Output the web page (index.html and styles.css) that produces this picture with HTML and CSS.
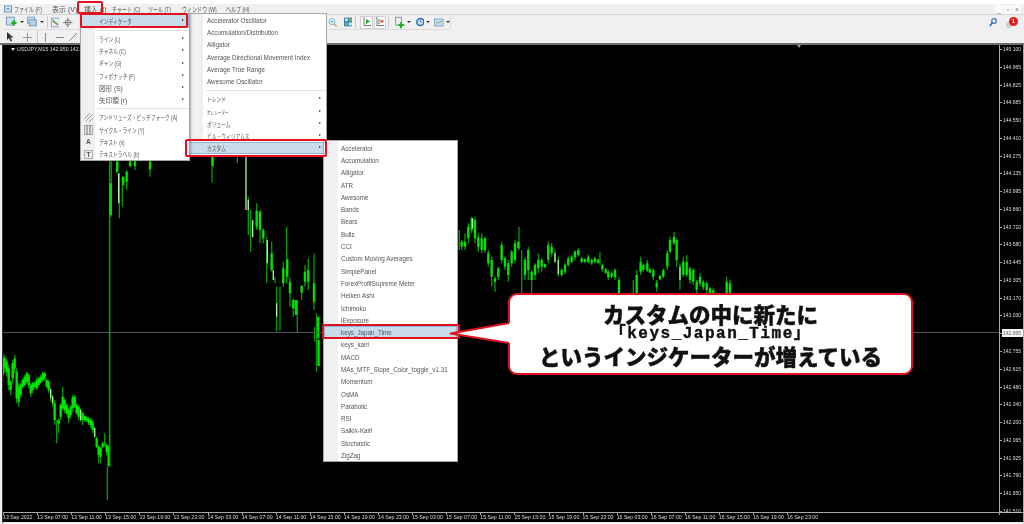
FILE: index.html
```html
<!DOCTYPE html>
<html lang="ja">
<head>
    <meta charset="UTF-8">
    <title>USDJPY,M15</title>
    <link rel="stylesheet" href="styles.css">
</head>
<body>
    <div class="screen">
        <div class="titlebar"></div>

        <!-- Menu bar -->
        <div class="menubar">
            <svg class="app-icon" width="8" height="8" viewBox="0 0 8 8"><rect x="0.5" y="1" width="7" height="6" fill="#dbe8f5" stroke="#6d94bd"/><path d="M2 5l2-2 2 2" fill="none" stroke="#4f7fae"/></svg>
            <span class="menubar-item jp">ファイル (F)</span>
            <span class="menubar-item">表示 (V)</span>
            <span class="menubar-item">挿入 (I)</span>
            <span class="menubar-item jp">チャート (C)</span>
            <span class="menubar-item jp">ツール (T)</span>
            <span class="menubar-item jp">ウィンドウ (W)</span>
            <span class="menubar-item jp">ヘルプ (H)</span>
            <div class="window-buttons">
                <span class="window-button">_</span>
                <span class="window-button">▫</span>
                <span class="window-button">×</span>
            </div>
        </div>

        <!-- Toolbars -->
        <div class="toolbars">
            <div class="toolbar toolbar-main">
                <div class="tool-panel">
                    <svg class="tool" width="14" height="12" viewBox="0 0 14 12"><rect x="0.5" y="0.5" width="9" height="9" fill="#cfe0f0" stroke="#6f8fb0"/><path d="M9 4v6M6 7h6" stroke="#19b51c" stroke-width="2.4"/></svg>
                    <i class="drop"></i>
                    <svg class="tool tool-profile" width="12" height="12" viewBox="0 0 12 12"><rect x="0.5" y="0.5" width="8" height="7" fill="#d5e3f1" stroke="#7b98b7"/><rect x="2.5" y="3.5" width="8" height="7" fill="#b9cfe6" stroke="#6a8cb0"/></svg>
                    <i class="drop"></i>
                    <i class="tool-sep tool-sep-a"></i>
                    <svg class="tool" width="10" height="11" viewBox="0 0 10 11"><rect x="0.5" y="0.5" width="9" height="10" fill="#e4eef6" stroke="#7f9db8"/><path d="M2 3l3 3" stroke="#2ba02b" stroke-width="1.6"/><path d="M5 6l3 2" stroke="#d9542f" stroke-width="1.6"/></svg>
                    <svg class="tool tool-cross" width="11" height="11" viewBox="0 0 11 11"><circle cx="5.5" cy="5.5" r="3" fill="#e8e8e8" stroke="#777"/><path d="M5.5 0v11M0 5.5h11" stroke="#777"/></svg>
                    <svg class="tool tool-zoom" width="11" height="11" viewBox="0 0 11 11"><circle cx="4.5" cy="4.5" r="3.5" fill="#d5eef8" stroke="#79b7d2"/><path d="M3 4.5h3" stroke="#3f8fb5"/><path d="M7 7l3 3" stroke="#d7a545" stroke-width="1.6"/></svg>
                    <svg class="tool tool-grid" width="10" height="10" viewBox="0 0 10 10"><rect width="10" height="10" fill="#2f79b8"/><rect x="1" y="1" width="3.5" height="3" fill="#cfe6f5"/><rect x="5.5" y="1" width="3.5" height="3" fill="#6cc05b"/><rect x="1" y="5.5" width="3.5" height="3.5" fill="#6cc05b"/><rect x="5.5" y="5.5" width="3.5" height="3.5" fill="#cfe6f5"/></svg>
                    <i class="tool-sep tool-sep-b"></i>
                    <span class="tool-pressed"><svg width="9" height="10" viewBox="0 0 9 10"><path d="M2 0v8.5h7" fill="none" stroke="#777"/><path d="M4 2v5l4-2.500z" fill="#2aa52a"/></svg></span>
                    <span class="tool-pressed"><svg width="9" height="10" viewBox="0 0 9 10"><path d="M2 0v8.500h7" fill="none" stroke="#777"/><path d="M4 2v5" stroke="#777"/><rect x="5.500" y="3" width="3" height="2.500" fill="#d9602f"/></svg></span>
                    <i class="tool-sep tool-sep-c"></i>
                    <svg class="tool" width="11" height="13" viewBox="0 0 11 13"><rect x="0.500" y="0.500" width="7" height="9" fill="#e8eef4" stroke="#8090a0"/><path d="M7 6v7M3.500 9.500h7" stroke="#17ad1b" stroke-width="2.200"/></svg>
                    <i class="drop"></i>
                    <svg class="tool tool-clock" width="10" height="10" viewBox="0 0 10 10"><circle cx="5" cy="5" r="4" fill="#dbe9f5" stroke="#246fb5" stroke-width="1.800"/><path d="M5 2.500V5l2 1" fill="none" stroke="#246fb5"/></svg>
                    <i class="drop"></i>
                    <svg class="tool tool-image" width="11" height="9" viewBox="0 0 11 9"><rect x="0.500" y="0.500" width="10" height="8" fill="#c6dcef" stroke="#7da2c4"/><path d="M2 6l2-2 2 1 3-2" fill="none" stroke="#6aa05a"/></svg>
                    <i class="drop"></i>
                </div>
                <div class="toolbar-right">
                    <svg width="8" height="9" viewBox="0 0 8 9"><circle cx="5" cy="3" r="2.300" fill="#fff" stroke="#2f6fc9" stroke-width="1.300"/><path d="M3.500 4.500L.800 8" stroke="#2f6fc9" stroke-width="1.500"/></svg>
                    <span class="bell"><i class="bell-base"></i><b class="bell-badge">1</b></span>
                </div>
            </div>
            <div class="toolbar toolbar-draw">
                <svg class="draw-tool" width="8" height="10" viewBox="0 0 8 10"><path d="M1 0v8l2-2 1.500 3.500 1.500-.7L4.500 5.500H7.500z" fill="#333"/></svg>
                <svg class="draw-tool draw-cross" width="9" height="9" viewBox="0 0 9 9"><path d="M4.500 0v9M0 4.500h9" stroke="#999"/></svg>
                <i class="tool-sep tool-sep-d"></i>
                <svg class="draw-tool draw-vline" width="3" height="9" viewBox="0 0 3 9"><path d="M1.500 0v9" stroke="#888"/></svg>
                <svg class="draw-tool draw-hline" width="8" height="3" viewBox="0 0 8 3"><path d="M0 1.500h8" stroke="#888"/></svg>
                <svg class="draw-tool draw-trend" width="8" height="8" viewBox="0 0 8 8"><path d="M0 8L8 0" stroke="#888"/></svg>
            </div>
        </div>

        <!-- Chart window -->
        <div class="chart">
            <div class="chart-row">
                <div class="plot">
                    <svg class="candles" viewBox="0 0 996 467" width="996" height="467">
                        <g transform="translate(-3 -45)">
                            <g transform="translate(0 340) scale(.3333)">
                                <path class="wick" d="M8 40V125M14 45V100M20 55V110M26 75V150M32 120V165M38 60V130M44 45V100M50 85V190M56 130V200M62 130V175M68 115V145M74 105V140M80 95V130M86 100V145M92 130V170M98 125V160M104 125V145M110 115V150M116 110V140M122 105V130M128 95V125M134 95V120M140 115V145M146 120V160M152 145V185M158 165V200M164 180V255M170 240V310M176 235V280M182 190V240M188 140V210M194 175V220M200 190V225M206 205V250M212 195V235M218 165V215M224 165V205M230 190V225M236 195V240M242 205V245M248 215V255M254 225V245M260 230V245M266 230V255M272 235V265M278 240V280M284 260V295M290 290V325M296 315V370M302 320V370M308 305V325M314 280V320M320 310V345M326 315V380M322 380V480"/>
                                <path class="body" d="M8 50V105M14 55V85M20 65V95M26 85V135M32 125V150M38 70V115M44 55V85M50 95V175M56 140V185M62 135V165M68 120V140M74 110V135M80 100V125M86 105V135M92 135V160M98 130V150M104 128V140M110 120V145M116 115V135M122 110V128M128 100V120M134 100V115M140 120V140M146 125V150M164 190V240M176 240V250M182 195V230M188 170V205M194 180V210M200 195V220M206 210V235M212 200V225M218 172V205M224 170V200M230 195V220M236 200V230M248 220V240M254 228V240M260 232V242M266 235V250M272 240V255M278 245V270M290 295V320M296 320V345M302 325V350M308 310V322M320 315V335M326 320V378"/>
                                <path class="glow" d="M152 148V175M158 170V190M242 210V240M284 265V290"/>
                            </g>
                            <g transform="translate(0 160) scale(.3333)">
                                <path class="spike" d="M329 -10V920"/>
                                <path class="wick" d="M334 -30V170M350 -30V40M358 40V175M367 50V140M380 30V90M390 -30V22M405 -30V30M450 -30V50M636 -30V68M712 -30V10M745 110V225M752 150V275M770 130V210M780 150V250M790 205V250M800 230V370M815 245V335M825 350V370M830 380V515M840 380V512M850 305V380M860 200V370M870 350V440M880 415V470M892 420V515M905 375V420M915 315V380M925 295V390M942 280V450M950 460V540"/>
                                <path class="body" d="M332 70V165M352 0V35M370 50V75M380 35V65M390 -10V18M405 -10V18M450 0V28M638 -10V18M770 152V200M780 155V210M790 210V235M815 280V330M850 325V370M862 298V350M870 365V400M880 420V445M888 420V465M905 378V398M915 335V365M925 330V365M942 370V425M955 470V535"/>
                                <path class="glow" d="M356 40V130M738 -10V150M745 120V150M758 180V232M802 240V310M820 330V360M830 430V470"/>
                            </g>
                            <g transform="translate(0 340) scale(.3333)">
                                <path class="wick" d="M950 -30V95M944 -40V5"/>
                                <path class="body" d="M956 0V78"/>
                            </g>
                            <g transform="translate(440 200) scale(.3333)">
                                <path class="wick" d="M58 90V150M65 120V150M75 100V150M85 70V130M95 50V100M105 50V130M115 100V155M125 100V160M135 110V160M145 150V200M155 170V260M165 230V275M175 200V240M185 125V190M195 170V210M205 180V245M215 150V200M225 120V190M237 80V150M245 150V290M255 170V240M265 140V240M275 210V285M285 190V240M295 160V220M305 175V215M315 190V205M325 125V190M335 130V170M345 150V190M355 170V230M365 205V230M375 190V222M385 170V200M395 165V190M405 150V180M415 145V170M425 170V190M435 175V190M445 165V190M455 175V195M465 170V190M480 155V195M487 190V215M497 205V222M505 210V240M515 215V235M525 205V240M537 230V300M580 240V300M590 210V300M602 170V225M610 190V215M622 180V215M630 205V220M640 205V240M650 240V275M660 225V240M670 205V235M682 150V210M690 110V160M702 95V135M710 115V200M720 190V270M730 170V230M740 165V230M750 200V250M760 205V255M770 240V280M780 220V260M790 240V270M800 245V280M810 260V300M820 265V300M860 230V300M870 240V300"/>
                                <path class="body" d="M65 125V140M75 125V140M85 80V115M95 55V90M105 60V115M115 112V140M125 115V150M135 115V150M145 160V190M155 180V230M165 235V245M175 205V230M185 135V180M195 175V200M205 190V225M215 155V190M225 130V180M235 125V145M255 180V225M265 150V210M275 215V240M285 195V225M295 180V205M305 180V200M315 192V202M325 135V180M335 140V160M365 210V225M375 195V215M385 175V195M395 170V185M405 155V172M415 150V165M425 175V185M435 178V186M445 170V185M455 180V190M465 175V186M475 178V190M487 195V208M497 208V218M505 215V232M515 220V230M525 210V232M537 240V290M590 225V290M602 185V215M610 195V210M622 190V212M630 208V218M640 210V230M650 248V262M660 228V238M670 210V230M682 160V200M690 120V155M702 110V130M710 120V180M730 185V225M740 185V225M750 205V240M760 210V245M770 245V270M780 230V250M790 245V262M800 250V270M810 265V285M820 270V285M860 245V285M870 250V285"/>
                                <path class="glow" d="M98 55V85M345 160V185M355 180V222M720 200V240"/>
                            </g>
                        </g>
                    </svg>
                    <div class="chart-title"><i class="chart-title-arrow"></i>USDJPY,M15 142.950 142.960</div>
                    <i class="shift-marker"></i>
                    <i class="price-line"></i>
                </div>
                <div class="price-axis">
                    <span class="price">145.100</span>
                    <span class="price">144.965</span>
                    <span class="price">144.825</span>
                    <span class="price">144.685</span>
                    <span class="price">144.550</span>
                    <span class="price">144.410</span>
                    <span class="price">144.275</span>
                    <span class="price">144.135</span>
                    <span class="price">143.995</span>
                    <span class="price">143.860</span>
                    <span class="price">143.720</span>
                    <span class="price">143.580</span>
                    <span class="price">143.445</span>
                    <span class="price">143.305</span>
                    <span class="price">143.170</span>
                    <span class="price">143.030</span>
                    <span class="price price-current">142.895</span>
                    <span class="price">142.755</span>
                    <span class="price">142.615</span>
                    <span class="price">142.480</span>
                    <span class="price">142.340</span>
                    <span class="price">142.200</span>
                    <span class="price">142.065</span>
                    <span class="price">141.925</span>
                    <span class="price">141.790</span>
                    <span class="price">141.650</span>
                    <span class="price">141.510</span>
                </div>
            </div>
            <div class="time-axis">
                <span class="time">13 Sep 2022</span>
                <span class="time">13 Sep 07:00</span>
                <span class="time">13 Sep 11:00</span>
                <span class="time">13 Sep 15:00</span>
                <span class="time">13 Sep 19:00</span>
                <span class="time">13 Sep 23:00</span>
                <span class="time">14 Sep 03:00</span>
                <span class="time">14 Sep 07:00</span>
                <span class="time">14 Sep 11:00</span>
                <span class="time">14 Sep 15:00</span>
                <span class="time">14 Sep 19:00</span>
                <span class="time">14 Sep 23:00</span>
                <span class="time">15 Sep 03:00</span>
                <span class="time">15 Sep 07:00</span>
                <span class="time">15 Sep 11:00</span>
                <span class="time">15 Sep 15:00</span>
                <span class="time">15 Sep 19:00</span>
                <span class="time">15 Sep 23:00</span>
                <span class="time">16 Sep 03:00</span>
                <span class="time">16 Sep 07:00</span>
                <span class="time">16 Sep 11:00</span>
                <span class="time">16 Sep 15:00</span>
                <span class="time">16 Sep 19:00</span>
                <span class="time">16 Sep 23:00</span>
            </div>
        </div>

        <!-- Indicator list (second level) -->
        <div class="menu menu-indicators">
            <div class="menu-item">Accelerator Oscillator</div>
            <div class="menu-item">Accumulation/Distribution</div>
            <div class="menu-item">Alligator</div>
            <div class="menu-item">Average Directional Movement Index</div>
            <div class="menu-item">Average True Range</div>
            <div class="menu-item">Awesome Oscillator</div>
            <div class="menu-sep"></div>
            <div class="menu-item has-sub"><span class="jp">トレンド</span></div>
            <div class="menu-item has-sub menu-item-small"><span class="jp">オシレーター</span></div>
            <div class="menu-item has-sub"><span class="jp">ボリューム</span></div>
            <div class="menu-item has-sub"><span class="jp">ビル・ウィリアムス</span></div>
            <div class="menu-item has-sub is-active menu-item-custom"><span class="jp">カスタム</span></div>
        </div>

        <!-- Insert menu -->
        <div class="menu menu-insert">
            <div class="menu-item has-sub is-active menu-item-first"><span class="jp">インディケータ</span></div>
            <div class="menu-sep"></div>
            <div class="menu-item has-sub"><span class="jp">ライン (L)</span></div>
            <div class="menu-item has-sub"><span class="jp">チャネル (C)</span></div>
            <div class="menu-item has-sub"><span class="jp">ギャン (G)</span></div>
            <div class="menu-item has-sub"><span class="jp">フィボナッチ (F)</span></div>
            <div class="menu-item has-sub">図形 (S)</div>
            <div class="menu-item has-sub">矢印類 (r)</div>
            <div class="menu-sep"></div>
            <div class="menu-item">
                <svg class="menu-icon" width="9" height="9" viewBox="0 0 9 9"><path d="M0 6l6-6M1.500 8.500l7-7M5 9l4-4" stroke="#999" fill="none"/></svg>
                <span class="jp">アンドリューズ・ピッチフォーク (A)</span>
            </div>
            <div class="menu-item">
                <svg class="menu-icon" width="9" height="10" viewBox="0 0 9 10"><rect x="0.500" y="0.500" width="8" height="9" fill="#e8e8e8" stroke="#aaa"/><path d="M3 0v10M6 0v10" stroke="#777"/></svg>
                <span class="jp">サイクル・ライン (Y)</span>
            </div>
            <div class="menu-item">
                <span class="menu-icon menu-icon-letter">A</span>
                <span class="jp">テキスト (x)</span>
            </div>
            <div class="menu-item">
                <span class="menu-icon menu-icon-letter menu-icon-boxed">T</span>
                <span class="jp">テキストラベル (b)</span>
            </div>
        </div>

        <!-- Custom indicators (third level) -->
        <div class="menu menu-custom">
            <div class="menu-item">Accelerator</div>
            <div class="menu-item">Accumulation</div>
            <div class="menu-item">Alligator</div>
            <div class="menu-item">ATR</div>
            <div class="menu-item">Awesome</div>
            <div class="menu-item">Bands</div>
            <div class="menu-item">Bears</div>
            <div class="menu-item">Bulls</div>
            <div class="menu-item">CCI</div>
            <div class="menu-item">Custom Moving Averages</div>
            <div class="menu-item">SimplePanel</div>
            <div class="menu-item">ForexProfitSupreme Meter</div>
            <div class="menu-item">Heiken Ashi</div>
            <div class="menu-item">Ichimoku</div>
            <div class="menu-item">iExposure</div>
            <div class="menu-item is-active">keys_Japan_Time</div>
            <div class="menu-item">keys_kairi</div>
            <div class="menu-item">MACD</div>
            <div class="menu-item">MAs_MTF_Slope_Color_toggle_v1.31</div>
            <div class="menu-item">Momentum</div>
            <div class="menu-item">OsMA</div>
            <div class="menu-item">Parabolic</div>
            <div class="menu-item">RSI</div>
            <div class="menu-item">Saikix-Kairi</div>
            <div class="menu-item">Stochastic</div>
            <div class="menu-item">ZigZag</div>
        </div>

        <!-- Red annotation boxes -->
        <div class="mark mark-insert"></div>
        <div class="mark mark-indicators"></div>
        <div class="mark mark-custom"></div>
        <div class="mark mark-keys"></div>

        <!-- Callout -->
        <div class="callout">
            <p class="callout-big">カスタムの中に新たに</p>
            <p class="callout-mid">「keys_Japan_Time」</p>
            <p class="callout-big">というインジケーターが増えている</p>
        </div>
        <svg class="callout-tail" width="62" height="26" viewBox="0 0 62 26">
            <path d="M61 3L1 13.500L61 23Z" fill="#fff"/>
            <path d="M60 3L1.500 13.500L60 23" fill="none" stroke="#e0101c" stroke-width="2" stroke-linejoin="round"/>
        </svg>
    </div>
</body>
</html>
```

FILE: styles.css
```css
/* Reset and basic layout */
* {
    margin: 0;
    padding: 0;
    box-sizing: border-box;
}

body {
    width: 1024px;
    height: 524px;
    overflow: hidden;
    background: #fff;
    font-family: "Liberation Sans", "Noto Sans CJK JP", sans-serif;
}

i {
    display: block;
}

/* the reference is a scaled down capture, everything is a bit soft */
.screen {
    position: relative;
    width: 1024px;
    height: 524px;
    overflow: hidden;
    display: flex;
    flex-direction: column;
    background: #f0f0f0;
    filter: blur(0.45px);
}

.titlebar {
    height: 4px;
    background: #fff;
}

/* kana in the original UI font are much narrower than Noto's */
.jp {
    display: inline-block;
    transform: scaleX(0.72);
    transform-origin: left center;
}

/* Menu bar */
.menubar {
    height: 11px;
    display: grid;
    grid-template-columns: 10px 38px 32px 28px 36px 34px 44px 1fr auto;
    align-items: center;
    padding-left: 4px;
    border-bottom: 1px solid #d4d4d4;
    font-size: 7px;
    color: #555;
}

.menubar-item {
    white-space: nowrap;
}

.window-buttons {
    grid-column: 9;
    display: flex;
    height: 9px;
    padding-right: 3px;
}

.window-button {
    width: 8px;
    margin-left: 1px;
    background: #fafafa;
    color: #777;
    font-size: 7px;
    line-height: 9px;
    text-align: center;
}

/* Toolbars */
.toolbars {
    height: 30px;
    border-bottom: 2px solid #6e6e6e;
}

.toolbar {
    height: 14px;
    display: flex;
    align-items: center;
}

.toolbar-main {
    height: 15px;
}

.tool-panel {
    width: 448px;
    height: 15px;
    margin-left: 3px;
    display: flex;
    align-items: center;
    padding-left: 3px;
    border: 1px solid #dcdcdc;
    border-top: 0;
    border-left: 0;
    border-radius: 0 0 3px 0;
}

.tool-profile {
    margin-left: 3px;
}

.drop {
    width: 0;
    height: 0;
    margin: 0 0 0 2px;
    border: 2px solid transparent;
    border-top: 2px solid #333;
    border-bottom: 0;
}

.tool-sep {
    width: 1px;
    height: 12px;
    background: #c9c9c9;
}

.tool-sep-a {
    margin: 0 3px;
}

.tool-cross {
    margin: 0 0 0 4px;
}

.tool-zoom {
    margin-left: 255px;
}

.tool-grid {
    margin-left: 6px;
}

.tool-sep-b {
    margin: 0 4px 0 3px;
}

.tool-pressed {
    width: 14px;
    height: 13px;
    margin-right: 1px;
    display: flex;
    align-items: center;
    justify-content: center;
    background: #fafafa;
    border: 1px solid #d0d0d0;
}

.tool-sep-c {
    margin: 0 6px 0 1px;
}

.tool-clock {
    margin-left: 5px;
}

.tool-image {
    margin-left: 4px;
}

.toolbar-right {
    margin-left: auto;
    display: flex;
    align-items: center;
    gap: 9px;
    padding-right: 6px;
}

.bell {
    position: relative;
    display: block;
    width: 12px;
    height: 11px;
}

.bell-base {
    position: absolute;
    left: 0;
    bottom: 0;
    width: 6px;
    height: 6px;
    border-radius: 50%;
    background: #ccc;
}

.bell-badge {
    position: absolute;
    right: 0;
    top: 0;
    width: 9px;
    height: 9px;
    border-radius: 50%;
    background: #e0201c;
    color: #fff;
    font-size: 6px;
    line-height: 9px;
    text-align: center;
}

.toolbar-draw {
    padding-left: 6px;
}

.draw-cross {
    margin-left: 9px;
}

.tool-sep-d {
    margin: 0 6px 0 5px;
}

.draw-hline {
    margin-left: 9px;
}

.draw-trend {
    margin-left: 5px;
}

/* Chart window */
.chart {
    flex: 1;
    display: flex;
    flex-direction: column;
    margin-left: 2px;
    background: #000;
    border-left: 1px solid #333;
    border-right: 1px solid #a8a8a8;
    border-bottom: 2px solid #f0f0f0;
}

.chart-row {
    flex: 1;
    display: flex;
}

.plot {
    position: relative;
    width: 996px;
    overflow: hidden;
}

.candles {
    display: block;
}

.wick {
    fill: none;
    stroke: #009a00;
    stroke-width: 4;
}

.body {
    fill: none;
    stroke: #00e400;
    stroke-width: 7;
}

.glow {
    fill: none;
    stroke: #a8f0a8;
    stroke-width: 4;
}

.spike {
    fill: none;
    stroke: #00a800;
    stroke-width: 4.5;
}

.chart-title {
    position: absolute;
    left: 8px;
    top: 0;
    display: flex;
    align-items: center;
    gap: 2px;
    color: #ddd;
    font-size: 5.2px;
    line-height: 8px;
    white-space: nowrap;
}

.chart-title-arrow {
    width: 0;
    height: 0;
    border: 2px solid transparent;
    border-top: 3px solid #ddd;
    border-bottom: 0;
}

.shift-marker {
    position: absolute;
    left: 794px;
    top: 0;
    width: 0;
    height: 0;
    border: 2px solid transparent;
    border-top: 3px solid #8ca0b8;
    border-bottom: 0;
}

.price-line {
    position: absolute;
    left: 0;
    right: 0;
    top: 287px;
    height: 1px;
    background: #4c5866;
}

.price-axis {
    flex: 1;
    margin-bottom: -3px;
    display: flex;
    flex-direction: column;
    justify-content: space-between;
    border-left: 1px solid #a8a8a8;
}

.price {
    display: block;
    position: relative;
    height: 8px;
    margin-left: 2px;
    padding-left: 1px;
    color: #ddd;
    font-size: 5px;
    line-height: 8px;
    white-space: nowrap;
}

.price::before {
    content: "";
    position: absolute;
    left: -2px;
    top: 4px;
    width: 2px;
    height: 1px;
    background: #a8a8a8;
}

.price-current {
    width: 21px;
    background: #f4f4f4;
    color: #666;
}

.time-axis {
    height: 10px;
    display: flex;
    border-top: 1px solid #a8a8a8;
}

.time {
    position: relative;
    flex: 0 0 34.1px;
    color: #ddd;
    font-size: 5.2px;
    line-height: 9px;
    white-space: nowrap;
}

.time::before {
    content: "";
    position: absolute;
    left: 0;
    top: 0;
    width: 1px;
    height: 2px;
    background: #a8a8a8;
}

/* Dropdown menus */
.menu {
    position: absolute;
    background: #fff;
    border: 1px solid #a6a6a6;
    font-size: 6.3px;
    color: #555;
}

.menu-insert {
    left: 80px;
    top: 13px;
    width: 110px;
    height: 148px;
    font-size: 6.6px;
    background: linear-gradient(to right, #f0f0f0 14px, #fff 14px);
    box-shadow: 1px 1px 2px rgba(0, 0, 0, 0.3);
}

.menu-indicators {
    left: 189px;
    top: 13px;
    width: 138px;
    height: 144px;
    background: linear-gradient(to right, #f0f0f0 13px, #fff 13px);
}

.menu-custom {
    left: 323px;
    top: 140px;
    width: 135px;
    height: 322px;
    padding-top: 1px;
    background: linear-gradient(to right, #f0f0f0 14px, #fff 14px);
}

.menu-item {
    position: relative;
    height: 12.3px;
    display: flex;
    align-items: center;
    white-space: nowrap;
}

.menu-insert .menu-item {
    padding-left: 18px;
}

.menu-indicators .menu-item {
    padding-left: 17px;
}

.menu-indicators .jp {
    font-size: 6.6px;
}

.menu-custom .menu-item {
    padding-left: 17px;
}

.menu-item-first {
    height: 13.5px;
}

.menu-indicators .menu-item-small .jp {
    font-size: 5px;
}

.has-sub::after {
    content: "";
    position: absolute;
    right: 5px;
    top: 4.5px;
    border: 1.5px solid transparent;
    border-left: 2px solid #333;
    border-right: 0;
}

.menu-sep {
    height: 1px;
    margin: 2px 0 2px 16px;
    background: #e4e4e4;
}

.is-active {
    background: #c9dcec;
    outline: 1px solid #8fb4d8;
    outline-offset: -1px;
}

.menu-indicators .menu-item-custom {
    margin-left: -2px;
    padding-left: 19px;
}

.menu-icon {
    position: absolute;
    left: 3px;
    top: 1.5px;
}

.menu-icon-letter {
    width: 9px;
    height: 9px;
    font-weight: bold;
    line-height: 9px;
    text-align: center;
}

.menu-icon-boxed {
    border: 1px solid #aaa;
    background: #eee;
    line-height: 7px;
}

/* Red annotation boxes */
.mark {
    position: absolute;
    border: 2px solid #e5101e;
    border-radius: 2px;
}

.mark-insert {
    left: 77px;
    top: 1px;
    width: 26px;
    height: 13px;
}

.mark-indicators {
    left: 80px;
    top: 13px;
    width: 108px;
    height: 15px;
}

.mark-custom {
    left: 185px;
    top: 139px;
    width: 142px;
    height: 18px;
}

.mark-keys {
    left: 322px;
    top: 324px;
    width: 138px;
    height: 15px;
}

/* Callout */
.callout {
    position: absolute;
    left: 508px;
    top: 293px;
    width: 405px;
    height: 82px;
    display: flex;
    flex-direction: column;
    align-items: center;
    justify-content: center;
    background: #fff;
    border: 2px solid #e0101c;
    border-radius: 9px;
    color: #111;
    font-family: "Noto Sans CJK JP", sans-serif;
    font-weight: 900;
    -webkit-text-stroke: 0.4px #111;
}

.callout-big {
    font-size: 21.5px;
    line-height: 21px;
    white-space: nowrap;
}

.callout-mid {
    font-family: "Liberation Mono", "Noto Sans CJK JP", monospace;
    font-size: 16px;
    font-weight: bold;
    letter-spacing: 1.5px;
    line-height: 21px;
    white-space: nowrap;
}

.callout-tail {
    position: absolute;
    left: 449px;
    top: 320px;
}
```
